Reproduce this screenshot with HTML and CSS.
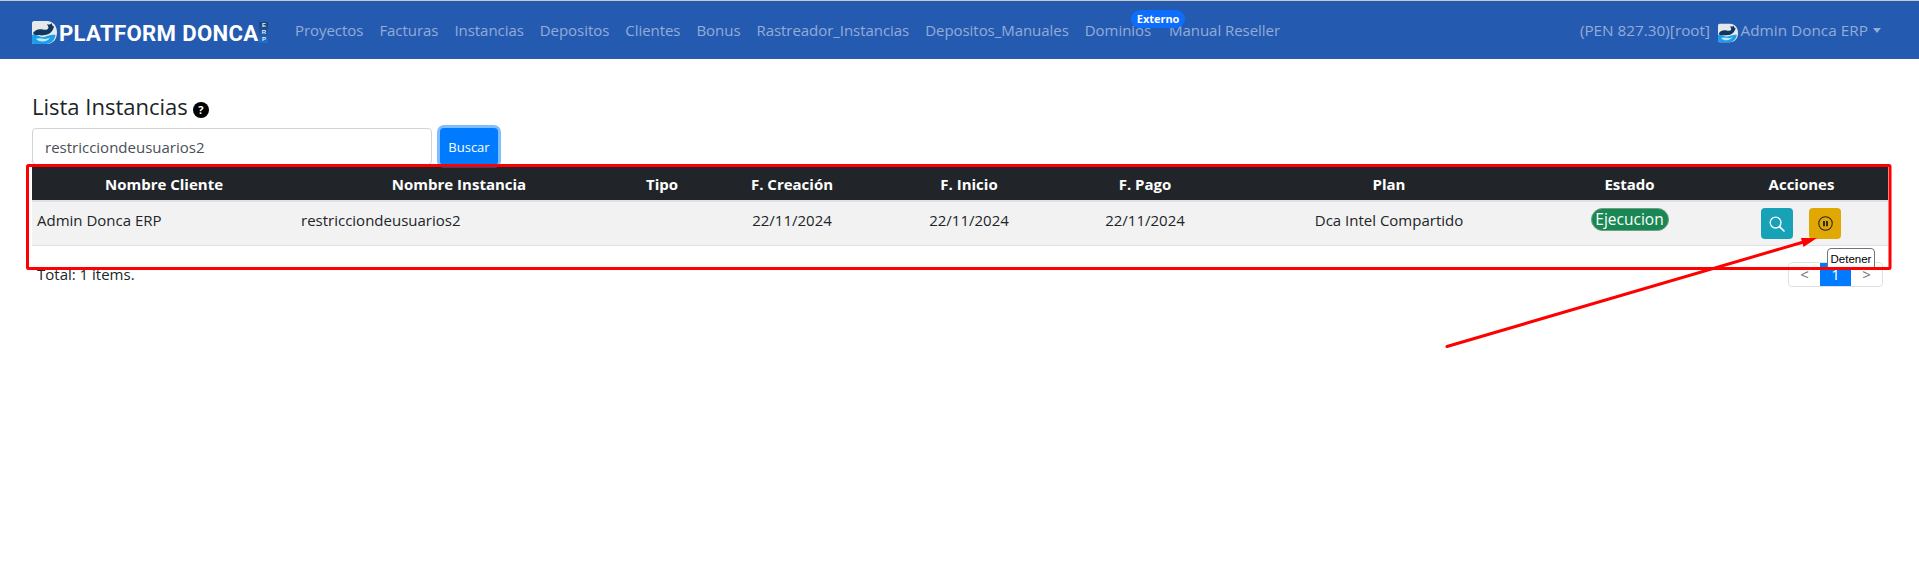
FILE: index.html
```html
<!DOCTYPE html>
<html lang="es">
<head>
<meta charset="utf-8">
<title>Lista Instancias</title>
<link rel="stylesheet" href="styles.css">
</head>
<body>
<svg class="defs" width="0" height="0" aria-hidden="true">
  <symbol id="logo" viewBox="0 0 25 23">
    <path d="M2 0H15C21 0 25 5 25 11.500C25 18 21 23 15 23H2C1 23 0 22 0 21V2C0 1 1 0 2 0Z" fill="#e6e9ec"/>
    <path d="M0 14C4 12 8 17 12 16C16 15 20 13 23.500 14C23 19 19 23 14 23H2C1 23 0 22 0 21Z" fill="#1c9fea"/>
    <path d="M1 12C3 8.500 7 7.500 11 8.500C13 9 15.500 9 16.500 7C16.500 5.500 15.500 4.500 15 3C17 4 18.500 3.500 20 2C19.500 4 20.500 5 22 5.500C21 10 17.500 14 12.500 14C10 15 7 14 5 14C3 14 2 14 1 12Z" fill="#12375f"/>
    <path d="M4 18C8 15.500 12 20 18 16.500C16 21 8 22 4 18Z" fill="#bfe8fb"/>
  </symbol>
</svg>

<nav class="navbar">
  <a class="brand">
    <svg class="brand-logo"><use href="#logo"/></svg>
    <span class="brand-name">PLATFORM DONCA</span>
    <span class="brand-erp"><span>E</span><span>R</span><span>P</span></span>
  </a>
  <ul class="nav-links">
    <li><a>Proyectos</a></li>
    <li><a>Facturas</a></li>
    <li><a>Instancias</a></li>
    <li><a>Depositos</a></li>
    <li><a>Clientes</a></li>
    <li><a>Bonus</a></li>
    <li><a>Rastreador_Instancias</a></li>
    <li><a>Depositos_Manuales</a></li>
    <li><a>Dominios</a></li>
    <li class="has-badge"><span class="badge-ext">Externo</span><a>Manual Reseller</a></li>
  </ul>
  <div class="nav-user">
    <span class="balance">(PEN 827.30)[root]</span>
    <svg class="avatar"><use href="#logo"/></svg>
    <span class="user-name">Admin Donca ERP</span>
    <span class="caret"></span>
  </div>
</nav>

<main class="page">
  <h1 class="title">Lista Instancias<span class="help">?</span></h1>
  <form class="search">
    <input class="search-input" type="text" value="restricciondeusuarios2">
    <button class="search-btn" type="button">Buscar</button>
  </form>

  <table class="grid">
    <colgroup>
      <col class="c1"><col class="c2"><col class="c3"><col class="c4"><col class="c5"><col class="c6"><col class="c7"><col class="c8"><col class="c9">
    </colgroup>
    <thead>
      <tr>
        <th>Nombre Cliente</th><th>Nombre Instancia</th><th>Tipo</th><th>F. Creación</th><th>F. Inicio</th><th>F. Pago</th><th>Plan</th><th>Estado</th><th>Acciones</th>
      </tr>
    </thead>
    <tbody>
      <tr>
        <td class="left">Admin Donca ERP</td>
        <td class="left">restricciondeusuarios2</td>
        <td></td>
        <td>22/11/2024</td>
        <td>22/11/2024</td>
        <td>22/11/2024</td>
        <td>Dca Intel Compartido</td>
        <td class="tight"><span class="status">Ejecucion</span></td>
        <td class="tight">
          <div class="action-wrap">
            <button class="act act-search" type="button" aria-label="Ver">
              <svg viewBox="0 0 16 16" width="16" height="16"><circle cx="6.600" cy="6.600" r="5.400" fill="none" stroke="#fff" stroke-width="1.300"/><path d="M10.600 10.600L15 15" stroke="#fff" stroke-width="1.600" stroke-linecap="round"/></svg>
            </button>
            <button class="act act-pause" type="button" aria-label="Detener">
              <svg viewBox="0 0 16 16" width="15" height="15"><circle cx="8" cy="8" r="7.200" fill="none" stroke="#212529" stroke-width="1.100"/><path d="M6.400 5.200V10.800M9.600 5.200V10.800" stroke="#212529" stroke-width="2"/></svg>
              <span class="tooltip">Detener</span>
            </button>
          </div>
        </td>
      </tr>
    </tbody>
  </table>

  <div class="footer-row">
    <span class="total">Total: 1 items.</span>
    <ul class="pager">
      <li>&lt;</li>
      <li class="active">1</li>
      <li>&gt;</li>
    </ul>
  </div>
</main>

<svg class="annotation" viewBox="0 0 1919 564" aria-hidden="true">
  <rect x="27.500" y="165.500" width="1862.500" height="103" fill="none" stroke="#ff0000" stroke-width="3" rx="1"/>
  <path d="M1447 346.500L1807 241" stroke="#ff0000" stroke-width="3" fill="none" stroke-linecap="round"/>
  <path d="M1817 238L1801 238L1803.500 247Z" fill="#ff0000"/>
</svg>
</body>
</html>
```
FILE: styles.css
```css
* { box-sizing: border-box; }
html, body { margin: 0; padding: 0; }
body {
  position: relative;
  min-height: 564px;
  background: #fff;
  color: #212529;
  font-family: "Open Sans", "Noto Sans", "Liberation Sans", sans-serif;
  font-size: 15px;
  overflow: hidden;
}
.defs { position: absolute; }

.navbar {
  display: flex;
  align-items: center;
  height: 59px;
  padding: 0 38px 0 32px;
  background: #245ab0;
  border-top: 1px solid #c9c9c9;
}
.brand { display: flex; align-items: center; width: 263px; margin-top: 5px; }
.brand-logo { width: 25px; height: 23px; flex: none; }
.brand-name {
  margin-left: 2px;
  color: #fff;
  font-family: Roboto, "Liberation Sans", sans-serif;
  font-weight: 700;
  font-size: 22.2px;
  letter-spacing: 0.3px;
  white-space: nowrap;
}
.brand-erp {
  display: flex;
  flex-direction: column;
  align-items: center;
  justify-content: center;
  width: 9px;
  height: 21px;
  margin-left: 1px;
  background: linear-gradient(#1d3f73, #1e6fd0);
  color: #e8eef7;
  font-family: "Liberation Sans", sans-serif;
  font-size: 6px;
  font-weight: 700;
  line-height: 7px;
}
.nav-links {
  display: flex;
  gap: 16px;
  margin: 0;
  padding: 0;
  list-style: none;
  letter-spacing: -0.05px;
  white-space: nowrap;
}
.nav-links a, .balance, .user-name { color: rgba(255,255,255,.5); }
.has-badge { position: relative; margin-left: 2px; }
.badge-ext {
  position: absolute;
  left: -38px;
  top: -10px;
  width: 54px;
  height: 18px;
  border-radius: 9px;
  background: #0d6efd;
  color: #fff;
  font-size: 11px;
  font-weight: 700;
  line-height: 18px;
  text-align: center;
}
.nav-user { display: flex; align-items: center; margin-left: auto; font-size: 15.3px; white-space: nowrap; }
.user-name { letter-spacing: 0.03px; }
.avatar { width: 20px; height: 20px; margin: 5px 2.5px 0 8px; }
.caret {
  margin-left: 5px;
  border-top: 5px solid rgba(255,255,255,.5);
  border-left: 4px solid transparent;
  border-right: 4px solid transparent;
}

.page { padding: 0 31px 0 32px; }
.title {
  display: flex;
  align-items: center;
  margin: 29px 0 3px;
  height: 37px;
  font-size: 22px;
  font-weight: 400;
  line-height: 37px;
}
.help {
  display: inline-block;
  width: 16px;
  height: 16px;
  margin: 7px 0 0 5px;
  border-radius: 50%;
  background: #000;
  color: #fff;
  font-size: 11px;
  font-weight: 700;
  line-height: 16px;
  text-align: center;
}
.search { display: flex; height: 37px; }
.search-input {
  width: 400px;
  height: 37px;
  padding: 0 12px;
  border: 1px solid #ced4da;
  border-radius: 4px;
  color: #495057;
  font: inherit;
}
.search-btn {
  width: 58px;
  height: 37px;
  margin-left: 8px;
  border: 0;
  border-radius: 4px;
  background: #007bff;
  box-shadow: 0 0 0 3px rgba(0,123,255,.5);
  color: #fff;
  font: inherit;
  font-size: 13px;
}

.grid {
  width: 1856px;
  margin-top: 2px;
  border-collapse: collapse;
  table-layout: fixed;
}
.c1 { width: 264px; }
.c2 { width: 326px; }
.c3 { width: 80px; }
.c4 { width: 180px; }
.c5 { width: 174px; }
.c6 { width: 178px; }
.c7 { width: 310px; }
.c8 { width: 171px; }
.c9 { width: 173px; }
.grid th {
  height: 34px;
  padding: 0 5px;
  background: #212529;
  border-bottom: 2px solid #dee2e6;
  color: #fff;
  font-weight: 700;
  text-align: center;
}
.grid td {
  height: 44px;
  padding: 8px 5px 0;
  background: #f2f2f2;
  border-bottom: 1px solid #dee2e6;
  text-align: center;
  vertical-align: top;
}
.grid td.left { text-align: left; }
.grid td.tight { padding-top: 6px; }
.status {
  display: inline-block;
  width: 78px;
  height: 23px;
  border: 1px solid #6f9f82;
  border-radius: 12px;
  background: #198754;
  color: #fff;
  font-size: 15.5px;
  line-height: 20px;
}
.action-wrap { display: flex; gap: 16px; padding-left: 41px; }
.act {
  position: relative;
  display: flex;
  align-items: center;
  justify-content: center;
  width: 32px;
  height: 31px;
  padding: 0;
  border: 0;
  border-radius: 4px;
}
.act-search { background: #17a2b8; }
.act-pause { background: #e0a800; }
.tooltip {
  position: absolute;
  left: 18px;
  top: 40px;
  width: 48px;
  height: 22px;
  border: 1px solid #6c757d;
  border-radius: 4px;
  background: #fff;
  color: #000;
  font-size: 11.5px;
  line-height: 20px;
  text-align: center;
  z-index: 2;
}

.footer-row {
  display: flex;
  align-items: center;
  justify-content: space-between;
  padding: 16px 5px 0;
}
.pager {
  display: flex;
  height: 25px;
  margin: 0;
  padding: 0;
  border: 1px solid #dee2e6;
  border-radius: 4px;
  list-style: none;
  color: #6c757d;
  line-height: 23px;
}
.pager li { width: 31px; text-align: center; }
.pager .active { background: #007bff; color: #fff; }

.annotation {
  position: absolute;
  left: 0;
  top: 0;
  width: 1919px;
  height: 564px;
  pointer-events: none;
  z-index: 5;
}
```
